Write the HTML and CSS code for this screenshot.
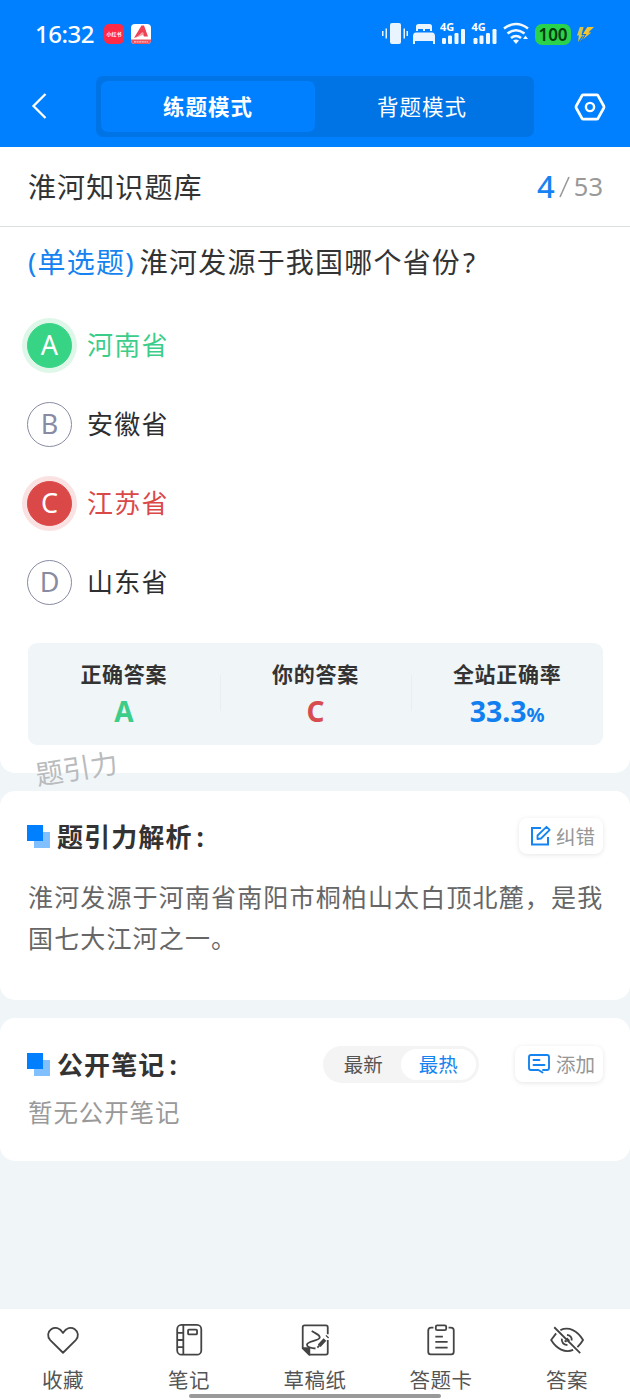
FILE: index.html
```html
<!DOCTYPE html>
<html lang="zh-CN">
<head>
<meta charset="utf-8">
<title>淮河知识题库</title>
<link rel="stylesheet" href="styles.css">
</head>
<body>
<div class="page">
  <header class="header">
    <div class="status">
      <span class="clock">16:32</span>
      <span class="app app-red">小红书</span>
      <svg class="app app-white" viewBox="0 0 20 20"><rect width="20" height="20" rx="4" fill="#fff"/><path d="M0 15.500h20v.5a4 4 0 0 1-4 4H4a4 4 0 0 1-4-4z" fill="#f0525f"/><path d="M3 14 10.500 1.500h2.500L17 12.500h-4l-2-4L8 12z" fill="#ed4255"/><path d="M4 14 12 8l1 2.500z" fill="#f7a0a6"/><path d="M3 17.800h14" stroke="#fbc2c7" stroke-width="1.200" stroke-dasharray="2 .6"/></svg>
      <svg class="indicators" viewBox="0 0 156 30">
        <g fill="#eaf4ff">
          <rect x="8" y="4" width="11" height="21" rx="2"/>
          <path d="M0 12h1.500v5H0zM3.500 9.500H5v10H3.500zM21.500 9.500H23v10h-1.500zM24.500 12H26v5h-1.500z"/>
          <path d="M34 12V7.500Q34 5 36.500 5h11Q50 5 50 7.500V12h-2v-2h-5v2h-2v-2h-5v2zM31 17.500q0-4 3-4h16q3 0 3 4v7.500h-2v-3H33v3h-2z"/>
        </g>
        <g fill="#f2f8ff">
          <rect x="60" y="19" width="4" height="6" rx="1.200"/><rect x="66" y="16.500" width="4" height="8.500" rx="1.200"/><rect x="72.500" y="14" width="4" height="11" rx="1.200"/><rect x="79" y="10" width="4" height="15" rx="1.200"/>
          <rect x="91.500" y="19" width="4" height="6" rx="1.200"/><rect x="97.500" y="16.500" width="4" height="8.500" rx="1.200"/><rect x="104" y="14" width="4" height="11" rx="1.200"/><rect x="110.500" y="10" width="4" height="15" rx="1.200"/>
        </g>
        <g class="network"><text x="58" y="12">4G</text><text x="89.500" y="12">4G</text></g>
        <g fill="none" stroke="#f2f8ff" stroke-width="2.600"><path d="M122 9.500Q134 .5 146 9.500M125.500 14.500q8.500-6.500 17 0M129 19q5-4 10 0"/></g>
        <path d="M131 21.500q3-2 6 0l-3 3.500zM141 20l2.500-3.500L146 20z" fill="#f2f8ff"/>
      </svg>
      <span class="battery">100</span>
      <svg class="bolt" viewBox="0 0 18 18"><path d="M3 1h4L5 8h2L1 17l1-7H0z" fill="#d6c54a"/><path d="M11 1h7l-6 6h3L3 17l4-7H5z" fill="#f4c52d"/><path d="M9 1 5.500 9H9l-5 8" fill="none" stroke="#0a72d8" stroke-width="1.100"/></svg>
    </div>
    <div class="navbar">
      <svg class="back" viewBox="0 0 16 28"><path d="M14.500 2 2.500 14l12 12" fill="none" stroke="#fff" stroke-width="2.300"/></svg>
      <div class="modes"><span class="mode mode-active">练题模式</span><span class="mode">背题模式</span></div>
      <svg class="settings" viewBox="0 0 32 28" fill="none" stroke="#fff"><path d="M9.500 1.800h13q1 0 1.500.8l5.700 10.200q.6 1.200 0 2.400L24 25.400q-.5.800-1.500.8h-13q-1 0-1.500-.8L2.300 15.200q-.6-1.200 0-2.400L8 2.600q.5-.8 1.500-.8z" stroke-width="2.800"/><circle cx="16" cy="14" r="4.100" stroke-width="2.400"/></svg>
    </div>
  </header>

  <main>
    <section class="card question-card">
      <div class="bank"><h1 class="bank-name">淮河知识题库</h1><div class="progress"><span class="current">4</span><svg class="slash" viewBox="0 0 11 22"><path d="M10 1 1 21" stroke="#999" stroke-width="1.600"/></svg><span>53</span></div></div>
      <p class="question"><span class="kind"><span class="paren">(</span>单选题<span class="paren">)</span></span>淮河发源于我国哪个省份<span class="paren mark">?</span></p>
      <ul class="options">
        <li class="option option-right"><span class="letter">A</span><span class="choice">河南省</span></li>
        <li class="option"><span class="letter">B</span><span class="choice">安徽省</span></li>
        <li class="option option-wrong"><span class="letter">C</span><span class="choice">江苏省</span></li>
        <li class="option"><span class="letter">D</span><span class="choice">山东省</span></li>
      </ul>
      <div class="stats">
        <div class="stat"><span class="stat-label">正确答案</span><span class="stat-value green">A</span></div>
        <div class="stat"><span class="stat-label">你的答案</span><span class="stat-value red">C</span></div>
        <div class="stat"><span class="stat-label">全站正确率</span><span class="stat-value blue">33.3<small>%</small></span></div>
      </div>
      <span class="watermark">题引力</span>
    </section>

    <section class="card analysis">
      <div class="card-head">
        <i class="marker"></i><h2 class="card-title">题引力解析<span class="colon">:</span></h2>
        <button class="chip"><svg class="chip-icon" viewBox="0 0 22 22" fill="none" stroke="#1684f0" stroke-width="2"><path d="M11 3H2v16.500h16V12" /><path d="M7.500 14v-3.500L16.500 1.800l3.200 3L11 13.500z" stroke-width="1.800" stroke-linejoin="round"/></svg>纠错</button>
      </div>
      <p class="analysis-text">淮河发源于河南省南阳市桐柏山太白顶北麓，是我国七大江河之一。</p>
    </section>

    <section class="card notes">
      <div class="card-head">
        <i class="marker"></i><h2 class="card-title">公开笔记<span class="colon">:</span></h2>
        <div class="sort"><span class="sort-item">最新</span><span class="sort-item sort-active">最热</span></div>
        <button class="chip chip-add"><svg class="chip-icon" viewBox="0 0 22 22" fill="none" stroke="#1684f0" stroke-width="1.900" stroke-linecap="round" stroke-linejoin="round"><path d="M15 17h4q2 0 2-2V4q0-2-2-2H3Q1 2 1 4v11q0 2 2 2h7.500l4 2.500M5.500 7h6M5.500 12h11"/></svg>添加</button>
      </div>
      <p class="empty">暂无公开笔记</p>
    </section>
  </main>

  <nav class="tabs">
    <a class="tab"><svg class="tab-icon" viewBox="0 0 36 36"><path d="M18 31.500 4.500 18.200C1 14.500 1.800 9 5.500 6.500 9.500 4 14.500 5 18 10.500 21.500 5 26.500 4 30.500 6.500c3.700 2.500 4.500 8 1 11.700z"/></svg>收藏</a>
    <a class="tab"><svg class="tab-icon" viewBox="0 0 36 36"><rect x="5.500" y="2" width="25.500" height="31.500" rx="4.500"/><path d="M12 2v31.500M5.500 10.500H12M5.500 18H12M5.500 25.500H12"/><rect x="17" y="7" width="9.500" height="5" rx="1"/></svg>笔记</a>
    <a class="tab"><svg class="tab-icon" viewBox="0 0 36 36"><path d="M31.500 12V4.500q0-2-2-2H7q-2 0-2 2v22l7 7h17.500q2 0 2-2V18"/><path d="M5 26.500h7v7z" fill="#444"/><path d="M14.500 8.500C20 12 23.500 12.500 23 15.500 22.500 19 10 19 9.500 23c0 2.500 4 3.500 9 4"/><path d="m22.500 24 6-6.500M30.500 15l1-1" stroke-width="4"/><path d="m20.500 26 2-2"/></svg>草稿纸</a>
    <a class="tab"><svg class="tab-icon" viewBox="0 0 36 36"><path d="M10 5H7.500Q4.500 5 4.500 8v22.500q0 2.800 2.500 2.800h22q2.500 0 2.500-2.800V8q0-3-3-3H26"/><rect x="12.500" y="2.500" width="11" height="5" rx="1.500"/><path d="M12 14.500h8M12 20h13M12 26h13"/></svg>答题卡</a>
    <a class="tab"><svg class="tab-icon" viewBox="0 0 36 36"><path d="M6.500 11 1.200 18C7 27.500 16 32 24.500 28.500M11 7.500C20 3.500 29 8 35 18q-2 3.500-6 7.500M4.500 4.500 32 32"/><path d="M18 12.500q5.500 1 5 6M12.500 16.500q-.5 6 6 7M17.500 16l3 3M15.500 18.500l2 1.500"/></svg>答案</a>
    <i class="home-bar"></i>
  </nav>
</div>
</body>
</html>
```

FILE: styles.css
```css
* { box-sizing: border-box; }
body { margin: 0; background: #f0f5f8; color: #333; font-family: "Noto Sans CJK SC", sans-serif; }
h1, h2, p, ul { margin: 0; padding: 0; font-weight: 400; }
i { font-style: normal; }
.page { width: 630px; height: 1400px; display: flex; flex-direction: column; overflow: hidden; }

.header { height: 147px; background: #0080ff; color: #fff; flex: none; }
.status { height: 68px; padding: 0 35px; display: flex; align-items: center; }
.clock { width: 69px; font: 500 24px/30px "Noto Sans", sans-serif; letter-spacing: -.5px; white-space: nowrap; }
.app { width: 20px; height: 20px; flex: none; }
.app-red { border-radius: 5px; background: #ff2a45; font-size: 5px; font-weight: 700; line-height: 20px; text-align: center; white-space: nowrap; }
.app-white { margin-left: 7px; }
.indicators { width: 156px; height: 30px; margin-left: 231px; flex: none; }
.network { fill: #fff; font: 700 11px "Noto Sans", sans-serif; }
.battery { width: 36px; height: 21px; margin-left: -3px; border-radius: 7px; background: #2bd24b; color: #063c0d; font: 600 17px/21px "Noto Sans", sans-serif; text-align: center; flex: none; }
.bolt { width: 17px; height: 17px; margin-left: 6px; flex: none; }
.navbar { height: 79px; padding: 8px 24px 0 31px; display: flex; align-items: flex-start; }
.back { width: 16px; height: 28px; margin: 16px 49px 0 0; }
.modes { width: 438px; height: 61px; padding: 5px; display: flex; border-radius: 7px; background: #0074e5; }
.mode { flex: 1; height: 51px; font-size: 21.500px; line-height: 49px; letter-spacing: 1px; text-align: center; border-radius: 7px; }
.mode-active { background: #0080ff; font-weight: 700; }
.settings { width: 32px; height: 28px; margin: 17px 0 0 40px; }

.card { background: #fff; }
.question-card { position: relative; height: 625.500px; border-radius: 0 0 15px 15px; }
.bank { height: 80px; padding: 0 27px 2px 28px; display: flex; justify-content: space-between; align-items: center; border-bottom: 1px solid #dcdfe0; }
.bank-name { font-size: 28px; letter-spacing: 1.100px; }
.progress { display: flex; align-items: center; color: #999; font: 25.500px/40px "Noto Sans", sans-serif; }
.current { color: #1783f2; font-size: 31px; font-weight: 500; }
.slash { width: 11px; height: 22px; margin: 2px 4px 0; }
.question { height: 70px; padding-left: 28px; font-size: 28px; line-height: 68px; letter-spacing: 1.200px; white-space: nowrap; }
.kind { margin-right: 5px; color: #1683f0; }
.paren { font-family: "Noto Sans", sans-serif; }
.mark { margin-left: 2px; }
.options { padding: 9px 27px 0; list-style: none; }
.option { height: 79px; display: flex; align-items: center; gap: 15px; font-size: 26px; letter-spacing: 1.200px; color: #2c2e30; }
.choice { padding-bottom: 4px; }
.letter { width: 45px; height: 45px; border: 1.500px solid #888ba3; border-radius: 50%; color: #888ba3; font: 27px/42px "Noto Sans", sans-serif; letter-spacing: 0; text-align: center; }
.option-right { color: #3dcd8a; }
.option-right .letter { border-color: #37d486; background: #37d486; color: #fff; box-shadow: 0 0 0 5px #dff7e9; }
.option-wrong { color: #db4848; }
.option-wrong .letter { border-color: #db4848; background: #db4848; color: #fff; box-shadow: 0 0 0 5px #fbe2e2; }
.stats { margin: 21px 27px 0 28px; padding-top: 12px; height: 102px; display: flex; align-items: flex-start; border-radius: 9px; background: #f0f5f8; }
.stat { position: relative; flex: 1; display: flex; flex-direction: column; align-items: center; }
.stat + .stat::before { content: ""; position: absolute; left: 0; top: 20px; width: 1px; height: 36px; background: #eaedf1; }
.stat-label { font-size: 21px; font-weight: 700; line-height: 36px; letter-spacing: .7px; }
.stat-value { height: 38px; margin-top: 1px; font: 700 28px/38px "Noto Sans", sans-serif; }
.stat-value small { font-size: 20px; }
.green { color: #3dcd8a; } .red { color: #d64c4f; } .blue { color: #107fef; font-size: 28.500px; }
.watermark { position: absolute; z-index: 1; left: 35px; top: 600px; color: #b9bbbd; font-size: 27.500px; line-height: 40px; transform: rotate(-9deg); }

.analysis { height: 209px; margin-top: 18.500px; padding-top: 25px; border-radius: 15px; }
.notes { height: 142.500px; margin-top: 18px; padding-top: 26px; border-radius: 15px; }
.card-head { height: 40px; padding: 0 27px; display: flex; align-items: center; }
.marker { position: relative; width: 23px; height: 23px; margin-right: 7px; }
.marker::before, .marker::after { content: ""; position: absolute; width: 16px; height: 16px; }
.marker::before { right: 0; bottom: 0; background: #80c0ff; }
.marker::after { left: 0; top: 0; background: #0080ff; }
.card-title { font-size: 26px; font-weight: 700; line-height: 40px; letter-spacing: 1.100px; white-space: nowrap; }
.colon { font-family: "Noto Sans", sans-serif; margin-left: 4px; }
.chip { height: 36px; margin-left: auto; padding: 0 8px 0 11px; display: flex; align-items: center; gap: 4px; border: 0; border-radius: 8px; background: #fff; box-shadow: 0 1px 5px rgba(0, 0, 0, .1); color: #969696; font: 19.500px/34px "Noto Sans CJK SC", sans-serif; white-space: nowrap; }
.chip-add { padding-left: 13px; gap: 6px; }
.chip-icon { width: 22px; height: 22px; }
.sort { width: 156px; height: 37px; margin-left: 145px; padding: 3px; display: flex; border-radius: 19px; background: #f4f4f4; }
.sort-item { flex: 1; border-radius: 16px; color: #555; font-size: 19.500px; line-height: 30px; text-align: center; }
.sort-active { background: #fff; color: #1683f0; }
.analysis-text { padding: 20px 20px 0 28px; color: #666; font-size: 25px; line-height: 41px; letter-spacing: 1.150px; }
.empty { padding: 8px 28px 0; color: #999; font-size: 24.500px; line-height: 40px; letter-spacing: .9px; }

.tabs { position: relative; height: 91.500px; margin-top: auto; display: flex; background: #fff; flex: none; }
.tab { flex: 1; padding-top: 14px; display: flex; flex-direction: column; align-items: center; gap: 4px; color: #555; font-size: 20.500px; line-height: 36px; letter-spacing: .5px; }
.tab-icon { width: 34px; height: 34px; fill: none; stroke: #444; stroke-width: 1.900; stroke-linejoin: round; }
.home-bar { position: absolute; left: 189px; bottom: 2px; width: 252px; height: 4.500px; border-radius: 3px; background: #999; }
```
